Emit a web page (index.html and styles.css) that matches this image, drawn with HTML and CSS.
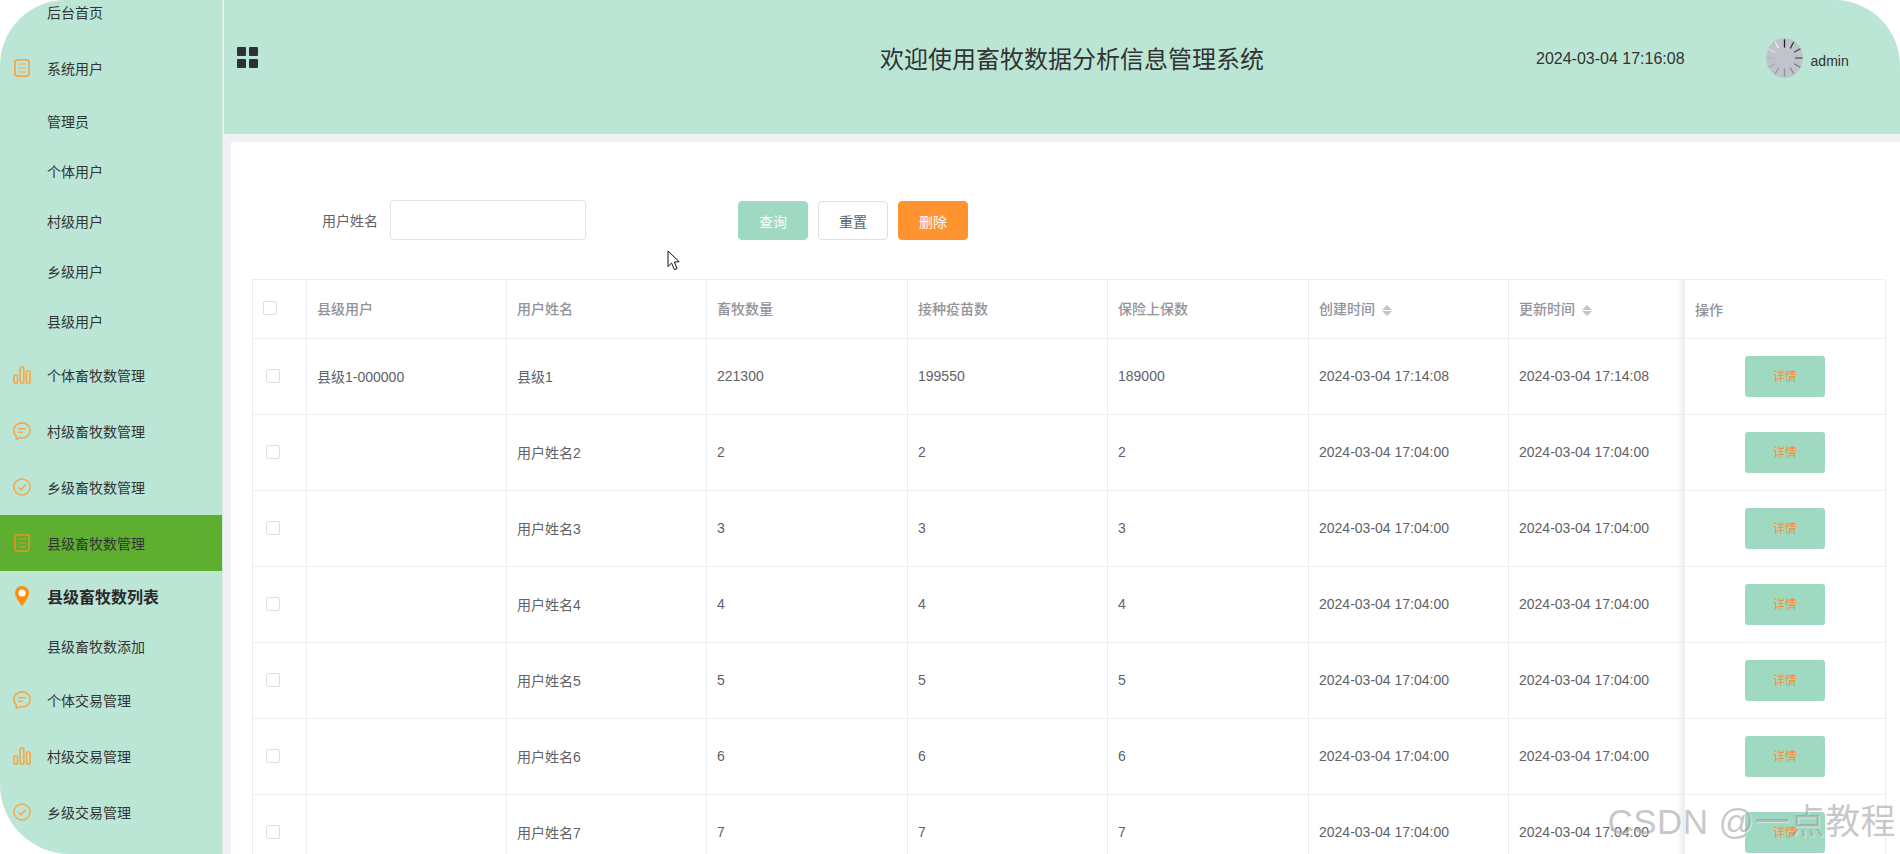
FILE: index.html
```html
<!DOCTYPE html>
<html lang="zh-CN">
<head>
<meta charset="utf-8">
<title>畜牧数据分析信息管理系统</title>
<link rel="stylesheet" href="styles.css">
</head>
<body>
<svg class="defs" width="0" height="0" aria-hidden="true">
  <symbol id="i-doc" viewBox="0 0 18 18"><rect x="1.900" y="0.900" width="14.200" height="16.200" rx="2.500" fill="none" stroke="currentColor" stroke-width="1.800"/><path d="M5 5h8M5 9h8M5 13h8" fill="none" stroke="currentColor" stroke-width="1.200"/></symbol>
  <symbol id="i-bars" viewBox="0 0 18 18"><g fill="none" stroke="currentColor" stroke-width="1.700"><rect x="0.900" y="9" width="3.600" height="8" rx="1"/><rect x="7.200" y="1" width="3.600" height="16" rx="1"/><rect x="13.500" y="5" width="3.600" height="12" rx="1"/></g></symbol>
  <symbol id="i-chat" viewBox="0 0 18 18"><path d="M9 .9c4.600 0 8.200 3.400 8.200 7.600S13.600 16 9 16c-.9 0-1.800-.1-2.600-.4L3.500 17.300l-.3-3.200C1.700 12.800.8 10.800.8 8.500.8 4.300 4.400.9 9 .9z" fill="none" stroke="currentColor" stroke-width="1.600"/><path d="M5 6.800h8M5 10.200h5" fill="none" stroke="currentColor" stroke-width="1.500"/></symbol>
  <symbol id="i-check" viewBox="0 0 18 18"><circle cx="9" cy="9" r="8.100" fill="none" stroke="currentColor" stroke-width="1.500"/><path d="M5.500 9.300l2.500 2.500 4.800-5.300" fill="none" stroke="currentColor" stroke-width="1.500"/></symbol>
  <symbol id="i-pin" viewBox="0 0 14 20"><path d="M7 0C3.100 0 0 3 0 6.900 0 11.500 7 20 7 20s7-8.500 7-13.100C14 3 10.900 0 7 0z" fill="currentColor"/><circle cx="7" cy="7" r="3.600" fill="#fff"/></symbol>
</svg>

<div class="app">
  <aside class="sidebar">
    <nav class="nav">
      <a class="group">
        <span class="icon"></span>后台首页
      </a>
      <a class="group"><svg class="icon"><use href="#i-doc"/></svg>系统用户</a>
      <a class="sub">管理员</a>
      <a class="sub">个体用户</a>
      <a class="sub">村级用户</a>
      <a class="sub">乡级用户</a>
      <a class="sub">县级用户</a>
      <a class="group"><svg class="icon"><use href="#i-bars"/></svg>个体畜牧数管理</a>
      <a class="group"><svg class="icon"><use href="#i-chat"/></svg>村级畜牧数管理</a>
      <a class="group"><svg class="icon"><use href="#i-check"/></svg>乡级畜牧数管理</a>
      <a class="group active"><svg class="icon"><use href="#i-doc"/></svg>县级畜牧数管理</a>
      <a class="sub current"><svg class="pin"><use href="#i-pin"/></svg>县级畜牧数列表</a>
      <a class="sub">县级畜牧数添加</a>
      <a class="group"><svg class="icon"><use href="#i-chat"/></svg>个体交易管理</a>
      <a class="group"><svg class="icon"><use href="#i-bars"/></svg>村级交易管理</a>
      <a class="group"><svg class="icon"><use href="#i-check"/></svg>乡级交易管理</a>
    </nav>
  </aside>

  <main class="main">
    <header class="topbar">
      <div class="grid-icon"><i></i><i></i><i></i><i></i></div>
      <h1 class="title">欢迎使用畜牧数据分析信息管理系统</h1>
      <div class="clock">2024-03-04 17:16:08</div>
      <svg class="avatar" viewBox="0 0 37 40">
        <ellipse cx="18.500" cy="20" rx="18.500" ry="20" fill="#bfc3cc"/>
        <g stroke-width="1.300" stroke-linecap="round">
          <path d="M18.500 2v7" stroke="#222"/>
          <path d="M27.500 4.500l-3 5.500" stroke="#333"/>
          <path d="M34 11l-5.500 3" stroke="#444"/>
          <path d="M36 20h-6.500" stroke="#666"/>
          <path d="M34 29l-5.500-3" stroke="#777"/>
          <path d="M27.500 35.500l-3-5.500" stroke="#888"/>
          <path d="M18.500 38v-7" stroke="#909090"/>
          <path d="M9.500 35.500l3-5.500" stroke="#999"/>
          <path d="M3 29l5.500-3" stroke="#a5a5a5"/>
          <path d="M1.500 20H8" stroke="#b5b7bc"/>
          <path d="M3 11l5.500 3" stroke="#dcdde0"/>
          <path d="M9.500 4.500l3 5.500" stroke="#f2f2f2"/>
        </g>
      </svg>
      <div class="user">admin</div>
    </header>

    <section class="content">
      <form class="search">
        <label class="search-label" for="name">用户姓名</label>
        <input class="search-input" id="name" type="text">
        <div class="search-actions">
          <button class="btn btn-green" type="button">查询</button>
          <button class="btn btn-plain" type="button">重置</button>
          <button class="btn btn-orange" type="button">删除</button>
        </div>
      </form>

      <table class="data">
        <colgroup>
          <col class="c-check"><col class="c-a"><col class="c-a"><col class="c-b"><col class="c-a"><col class="c-b"><col class="c-a"><col class="c-time"><col class="c-b">
        </colgroup>
        <thead>
          <tr>
            <th class="head-check"><span class="box"></span></th>
            <th>县级用户</th>
            <th>用户姓名</th>
            <th>畜牧数量</th>
            <th>接种疫苗数</th>
            <th>保险上保数</th>
            <th>创建时间<span class="sort"><i class="up"></i><i class="down"></i></span></th>
            <th class="before-fixed">更新时间<span class="sort"><i class="up"></i><i class="down"></i></span></th>
            <th class="fixed">操作</th>
          </tr>
        </thead>
        <tbody>
          <tr><td class="body-check"><span class="box"></span></td><td>县级1-000000</td><td>县级1</td><td>221300</td><td>199550</td><td>189000</td><td>2024-03-04 17:14:08</td><td class="before-fixed">2024-03-04 17:14:08</td><td class="fixed op"><button class="detail" type="button">详情</button></td></tr>
          <tr><td class="body-check"><span class="box"></span></td><td></td><td>用户姓名2</td><td>2</td><td>2</td><td>2</td><td>2024-03-04 17:04:00</td><td class="before-fixed">2024-03-04 17:04:00</td><td class="fixed op"><button class="detail" type="button">详情</button></td></tr>
          <tr><td class="body-check"><span class="box"></span></td><td></td><td>用户姓名3</td><td>3</td><td>3</td><td>3</td><td>2024-03-04 17:04:00</td><td class="before-fixed">2024-03-04 17:04:00</td><td class="fixed op"><button class="detail" type="button">详情</button></td></tr>
          <tr><td class="body-check"><span class="box"></span></td><td></td><td>用户姓名4</td><td>4</td><td>4</td><td>4</td><td>2024-03-04 17:04:00</td><td class="before-fixed">2024-03-04 17:04:00</td><td class="fixed op"><button class="detail" type="button">详情</button></td></tr>
          <tr><td class="body-check"><span class="box"></span></td><td></td><td>用户姓名5</td><td>5</td><td>5</td><td>5</td><td>2024-03-04 17:04:00</td><td class="before-fixed">2024-03-04 17:04:00</td><td class="fixed op"><button class="detail" type="button">详情</button></td></tr>
          <tr><td class="body-check"><span class="box"></span></td><td></td><td>用户姓名6</td><td>6</td><td>6</td><td>6</td><td>2024-03-04 17:04:00</td><td class="before-fixed">2024-03-04 17:04:00</td><td class="fixed op"><button class="detail" type="button">详情</button></td></tr>
          <tr><td class="body-check"><span class="box"></span></td><td></td><td>用户姓名7</td><td>7</td><td>7</td><td>7</td><td>2024-03-04 17:04:00</td><td class="before-fixed">2024-03-04 17:04:00</td><td class="fixed op"><button class="detail" type="button">详情</button></td></tr>
        </tbody>
      </table>
    </section>
  </main>
</div>

<svg class="cursor" viewBox="0 0 13 21"><path d="M1 1v15.500l3.600-3.400 2.800 6.600 2.700-1.200-2.800-6.400 4.900-.4z" fill="#fff" stroke="#111" stroke-width="1"/></svg>
<div class="watermark">CSDN @一点教程</div>
</body>
</html>
```

FILE: styles.css
```css
* { box-sizing: border-box; }

html, body {
  margin: 0;
  height: 854px;
  overflow: hidden;
  background: #fff;
  font-family: "Liberation Sans", "Noto Sans CJK SC", sans-serif;
  color: #333;
}

.defs { position: absolute; }

.app {
  display: flex;
  height: 854px;
  overflow: hidden;
  border-radius: 66px 66px 0 70px;
  background: #f0f0f5;
}

/* Sidebar */
.sidebar {
  flex: 0 0 223px;
  height: 854px;
  overflow: hidden;
  background: #bbe6d6;
  border-right: 1px solid #d6ede4;
}

.nav {
  display: flex;
  flex-direction: column;
  margin-top: -16px;
  font-size: 14px;
  color: #333;
}

.group, .sub {
  display: flex;
  align-items: center;
  flex: none;
}

.group { height: 56px; padding-left: 13px; }
.sub { height: 50px; padding-left: 47px; }
.sub + .group { margin-top: 1px; }

.icon {
  flex: none;
  width: 18px;
  height: 18px;
  margin-right: 16px;
  color: #f0a94c;
}

.active { background: #5eae30; }
.active .icon { color: #d09b25; }

.current {
  padding-left: 15px;
  font-size: 16px;
  font-weight: 700;
  color: #2a2a2a;
}

.pin {
  flex: none;
  width: 14px;
  height: 20px;
  margin-right: 18px;
  color: #ff8f0a;
}

/* Main column */
.main {
  flex: 1;
  min-width: 0;
  height: 854px;
  padding-left: 1px;
  display: flex;
  flex-direction: column;
}

.topbar {
  flex: 0 0 134px;
  display: flex;
  align-items: flex-start;
  background: #bbe6d6;
  color: #333;
  padding-left: 13px;
}

.grid-icon {
  flex: none;
  display: grid;
  grid-template-columns: 9px 9px;
  gap: 3px;
  margin-top: 47px;
}

.grid-icon i {
  display: block;
  height: 9px;
  background: #2e3236;
  border-radius: 1px;
}

.title {
  flex: none;
  width: 385px;
  margin: 42px 0 0 622px;
  font-size: 24px;
  line-height: 36px;
  font-weight: 400;
  white-space: nowrap;
}

.clock {
  flex: none;
  margin: 49px 0 0 271px;
  font-size: 16px;
  line-height: 20px;
  white-space: nowrap;
}

.avatar {
  flex: none;
  width: 37px;
  height: 40px;
  margin: 38px 0 0 81px;
}

.user {
  margin: 52px 0 0 8px;
  font-size: 14px;
  line-height: 18px;
  color: #333;
}

/* Content */
.content {
  flex: 1;
  min-height: 0;
  margin: 8px 0 0 7px;
  padding: 58px 14px 0 21px;
  background: #fff;
  overflow: hidden;
}

.search {
  display: flex;
  align-items: flex-end;
  height: 40px;
  margin-bottom: 39px;
}

.search-label {
  align-self: center;
  margin-left: 70px;
  margin-right: 12px;
  font-size: 14px;
  color: #606266;
}

.search-input {
  width: 196px;
  height: 40px;
  padding: 0 12px;
  border: 1px solid #e0e2e8;
  border-radius: 4px;
  background: #fff;
  outline: none;
}

.search-actions {
  display: flex;
  gap: 10px;
  margin-left: 152px;
}

.btn {
  width: 70px;
  height: 39px;
  padding: 0;
  border: 1px solid #dcdfe6;
  border-radius: 4px;
  font: inherit;
  font-size: 14px;
  cursor: pointer;
}

.btn-green { background: #9fd9c2; border-color: #9fd9c2; color: #fff; }
.btn-plain { background: #fff; color: #606266; }
.btn-orange { background: #ff9330; border-color: #ff9330; color: #fff; }

/* Table */
.data {
  width: 1634px;
  table-layout: fixed;
  border-collapse: separate;
  border-spacing: 0;
  border-top: 1px solid #ebeef5;
  border-left: 1px solid #ebeef5;
  font-size: 14px;
}

.c-check { width: 54px; }
.c-a { width: 200px; }
.c-b { width: 201px; }
.c-time { width: 176px; }

.data th, .data td {
  padding: 0 10px 2px;
  border-right: 1px solid #ebeef5;
  border-bottom: 1px solid #ebeef5;
  text-align: left;
  vertical-align: middle;
  white-space: nowrap;
  overflow: hidden;
}

.data th {
  height: 59px;
  font-weight: 500;
  color: #909399;
}

.data td {
  height: 76px;
  color: #606266;
}

.data .before-fixed {
  background: linear-gradient(to left, rgba(0, 0, 0, .07), rgba(0, 0, 0, 0) 7px);
}

.data .fixed { padding-bottom: 1px; }

.data .op { padding: 0 0 0 60px; }

.box {
  display: block;
  width: 14px;
  height: 14px;
  border: 1px solid #dcdfe6;
  border-radius: 2px;
  background: #fff;
}

.data .head-check { padding-left: 10px; }
.data .body-check { padding-left: 13px; }

.sort {
  display: inline-flex;
  flex-direction: column;
  gap: 1px;
  margin-left: 7px;
  vertical-align: middle;
}

.sort i {
  display: block;
  width: 0;
  height: 0;
  border-left: 5px solid transparent;
  border-right: 5px solid transparent;
}

.sort .up { border-bottom: 5px solid #c0c4cc; }
.sort .down { border-top: 5px solid #c0c4cc; }

.detail {
  display: block;
  width: 80px;
  height: 41px;
  padding: 0 0 2px;
  border: 0;
  border-radius: 3px;
  background: #9fd9c2;
  color: #f58f3f;
  font: inherit;
  font-size: 12px;
}

/* Overlays */
.cursor {
  position: absolute;
  left: 667px;
  top: 250px;
  width: 13px;
  height: 21px;
}

.watermark {
  position: absolute;
  right: 4px;
  top: 800px;
  font-size: 35px;
  line-height: 44px;
  letter-spacing: .4px;
  white-space: nowrap;
  color: rgba(130, 130, 130, .45);
  text-shadow: 1px 1px 1px rgba(255, 255, 255, .5);
}
```
